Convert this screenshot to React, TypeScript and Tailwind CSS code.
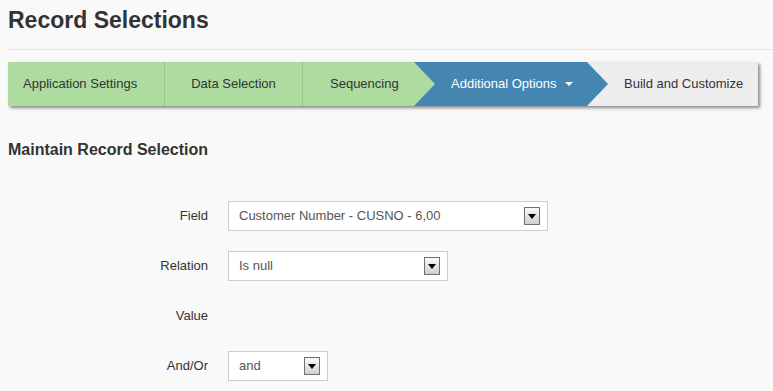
import React from 'react';

const font = { fontFamily: '"Liberation Sans", Arial, sans-serif' };

function SelectBox({ width, value }: { width: string; value: string }) {
  return (
    <div
      className={`${width} h-[30px] bg-white border border-[#cccccc] flex items-center justify-between pl-[10px] pr-[7px]`}
    >
      <span className="text-[13px] text-[#555555]">{value}</span>
      <span className="w-[16px] h-[18px] border border-[#6f6f6f] bg-gradient-to-b from-[#fafafa] to-[#cfcfcf] flex items-center justify-center">
        <svg width="8" height="5" viewBox="0 0 8 5">
          <path d="M0 0h8L4 5z" fill="#000" />
        </svg>
      </span>
    </div>
  );
}

function FormRow({ label, children }: { label: string; children?: React.ReactNode }) {
  return (
    <div className="flex items-center h-[30px]">
      <div className="w-[208px] text-right text-[13px] text-[#333333]">{label}</div>
      <div className="ml-[20px]">{children}</div>
    </div>
  );
}

export default function App() {
  return (
    <div className="w-[773px] h-[391px] bg-[#f9f9f9] overflow-hidden" style={font}>
      <div className="pl-[8px]">
        <h1 className="pt-[7px] text-[23px] leading-[26px] font-bold text-[#333333]">Record Selections</h1>
        <div className="mt-[16px] h-px bg-[#e6e6e6]" />

        <div className="mt-[12px] w-[750px] h-[44px] flex bg-[#ededed] shadow-[2px_2px_3px_rgba(0,0,0,0.45)] text-[13px] text-[#333333]">
          <div className="w-[156px] bg-[#addba0] flex items-center pl-[15px]">Application Settings</div>
          <div className="w-[138px] bg-[#addba0] border-l border-[#95c786] flex items-center justify-center">
            Data Selection
          </div>
          <div className="w-[112px] bg-[#addba0] border-l border-[#95c786] flex items-center pl-[27px]">
            Sequencing
          </div>
          <div className="relative z-10 w-[194px] -mr-[21px] bg-[#4585b1] text-white flex items-center pl-[37px] [clip-path:polygon(0_0,173px_0,100%_50%,173px_100%,0_100%)]">
            <span className="absolute left-0 top-0 h-full w-[21px] bg-[#addba0] [clip-path:polygon(0_0,100%_50%,0_100%)]" />
            <span>Additional Options</span>
            <svg className="ml-[8px]" width="8" height="4" viewBox="0 0 8 4">
              <path d="M0 0h8L4 4z" fill="#ffffff" />
            </svg>
          </div>
          <div className="w-[171px] flex items-center pl-[37px]">Build and Customize</div>
        </div>

        <h2 className="mt-[34px] text-[16px] leading-[20px] font-bold text-[#333333]">Maintain Record Selection</h2>
      </div>

      <div className="mt-[41px] flex flex-col gap-[20px]">
        <FormRow label="Field">
          <SelectBox width="w-[320px]" value="Customer Number - CUSNO - 6,00" />
        </FormRow>
        <FormRow label="Relation">
          <SelectBox width="w-[220px]" value="Is null" />
        </FormRow>
        <FormRow label="Value" />
        <FormRow label="And/Or">
          <SelectBox width="w-[100px]" value="and" />
        </FormRow>
      </div>
    </div>
  );
}
